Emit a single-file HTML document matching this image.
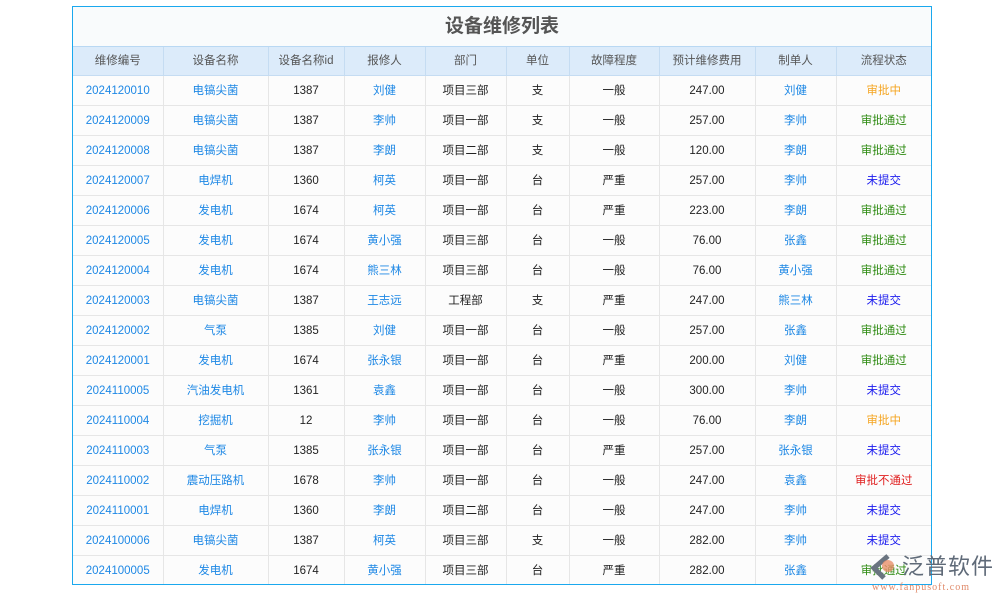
<!DOCTYPE html><html><head><meta charset="utf-8"><style>
body{margin:0;width:1000px;height:600px;background:#fff;font-family:"Liberation Sans","Noto Sans CJK SC",sans-serif;position:relative;overflow:hidden}
.box{position:absolute;left:72px;top:6px;width:858px;height:577px;border:1px solid #1aa8ee;background:#f9fbfc;overflow:hidden}
.title{height:39px;line-height:39px;text-align:center;font-size:19px;font-weight:bold;color:#555;border-bottom:1px solid #b9d8f3}
table{border-collapse:collapse;width:858px;table-layout:fixed;font-size:11.5px}
th,td{padding:0;line-height:14px;overflow:hidden;white-space:nowrap}
th{height:28px;background:#dcebfa;color:#555;font-weight:normal;border-right:1px solid #c5dcf2;border-bottom:1px solid #c5dcf2}
td{height:29px;text-align:center;border-right:1px solid #e6e6e6;border-bottom:1px solid #e6e6e6;color:#222;background:#fcfcfc}
th:last-child,td:last-child{border-right:none}
.b{color:#1e88e5}.o{color:#f5a623}.g{color:#2e8b12}.p{color:#1a1aee}.r{color:#e02020}
.logo{position:absolute;left:902px;top:553px;font-size:22px;line-height:28px;color:#5f6a78;letter-spacing:1px;white-space:nowrap}
.url{position:absolute;left:872px;top:582px;font-size:10px;line-height:12px;color:#e08a6a;letter-spacing:1px;font-family:"Liberation Serif",serif;white-space:nowrap}
</style></head><body>
<div class="box"><div class="title">设备维修列表</div>
<table><colgroup><col style="width:90px"><col style="width:105px"><col style="width:76px"><col style="width:81px"><col style="width:81px"><col style="width:63px"><col style="width:90px"><col style="width:96px"><col style="width:81px"><col style="width:95px"></colgroup>
<tr><th>维修编号</th><th>设备名称</th><th>设备名称id</th><th>报修人</th><th>部门</th><th>单位</th><th>故障程度</th><th>预计维修费用</th><th>制单人</th><th>流程状态</th></tr>
<tr><td class="b">2024120010</td><td class="b">电镐尖菌</td><td>1387</td><td class="b">刘健</td><td>项目三部</td><td>支</td><td>一般</td><td>247.00</td><td class="b">刘健</td><td class="o">审批中</td></tr>
<tr><td class="b">2024120009</td><td class="b">电镐尖菌</td><td>1387</td><td class="b">李帅</td><td>项目一部</td><td>支</td><td>一般</td><td>257.00</td><td class="b">李帅</td><td class="g">审批通过</td></tr>
<tr><td class="b">2024120008</td><td class="b">电镐尖菌</td><td>1387</td><td class="b">李朗</td><td>项目二部</td><td>支</td><td>一般</td><td>120.00</td><td class="b">李朗</td><td class="g">审批通过</td></tr>
<tr><td class="b">2024120007</td><td class="b">电焊机</td><td>1360</td><td class="b">柯英</td><td>项目一部</td><td>台</td><td>严重</td><td>257.00</td><td class="b">李帅</td><td class="p">未提交</td></tr>
<tr><td class="b">2024120006</td><td class="b">发电机</td><td>1674</td><td class="b">柯英</td><td>项目一部</td><td>台</td><td>严重</td><td>223.00</td><td class="b">李朗</td><td class="g">审批通过</td></tr>
<tr><td class="b">2024120005</td><td class="b">发电机</td><td>1674</td><td class="b">黄小强</td><td>项目三部</td><td>台</td><td>一般</td><td>76.00</td><td class="b">张鑫</td><td class="g">审批通过</td></tr>
<tr><td class="b">2024120004</td><td class="b">发电机</td><td>1674</td><td class="b">熊三林</td><td>项目三部</td><td>台</td><td>一般</td><td>76.00</td><td class="b">黄小强</td><td class="g">审批通过</td></tr>
<tr><td class="b">2024120003</td><td class="b">电镐尖菌</td><td>1387</td><td class="b">王志远</td><td>工程部</td><td>支</td><td>严重</td><td>247.00</td><td class="b">熊三林</td><td class="p">未提交</td></tr>
<tr><td class="b">2024120002</td><td class="b">气泵</td><td>1385</td><td class="b">刘健</td><td>项目一部</td><td>台</td><td>一般</td><td>257.00</td><td class="b">张鑫</td><td class="g">审批通过</td></tr>
<tr><td class="b">2024120001</td><td class="b">发电机</td><td>1674</td><td class="b">张永银</td><td>项目一部</td><td>台</td><td>严重</td><td>200.00</td><td class="b">刘健</td><td class="g">审批通过</td></tr>
<tr><td class="b">2024110005</td><td class="b">汽油发电机</td><td>1361</td><td class="b">袁鑫</td><td>项目一部</td><td>台</td><td>一般</td><td>300.00</td><td class="b">李帅</td><td class="p">未提交</td></tr>
<tr><td class="b">2024110004</td><td class="b">挖掘机</td><td>12</td><td class="b">李帅</td><td>项目一部</td><td>台</td><td>一般</td><td>76.00</td><td class="b">李朗</td><td class="o">审批中</td></tr>
<tr><td class="b">2024110003</td><td class="b">气泵</td><td>1385</td><td class="b">张永银</td><td>项目一部</td><td>台</td><td>严重</td><td>257.00</td><td class="b">张永银</td><td class="p">未提交</td></tr>
<tr><td class="b">2024110002</td><td class="b">震动压路机</td><td>1678</td><td class="b">李帅</td><td>项目一部</td><td>台</td><td>一般</td><td>247.00</td><td class="b">袁鑫</td><td class="r">审批不通过</td></tr>
<tr><td class="b">2024110001</td><td class="b">电焊机</td><td>1360</td><td class="b">李朗</td><td>项目二部</td><td>台</td><td>一般</td><td>247.00</td><td class="b">李帅</td><td class="p">未提交</td></tr>
<tr><td class="b">2024100006</td><td class="b">电镐尖菌</td><td>1387</td><td class="b">柯英</td><td>项目三部</td><td>支</td><td>一般</td><td>282.00</td><td class="b">李帅</td><td class="p">未提交</td></tr>
<tr><td class="b">2024100005</td><td class="b">发电机</td><td>1674</td><td class="b">黄小强</td><td>项目三部</td><td>台</td><td>严重</td><td>282.00</td><td class="b">张鑫</td><td class="g">审批通过</td></tr>
</table></div>
<svg style="position:absolute;left:870px;top:554px" width="30" height="26"><path d="M18 2 L4 14 L14 24" stroke="#6a7480" stroke-width="5" fill="none"/><circle cx="18" cy="12" r="6" fill="#e8906a" opacity=".8"/></svg>
<div class="logo">泛普软件</div>
<div class="url">www.fanpusoft.com</div>
</body></html>
